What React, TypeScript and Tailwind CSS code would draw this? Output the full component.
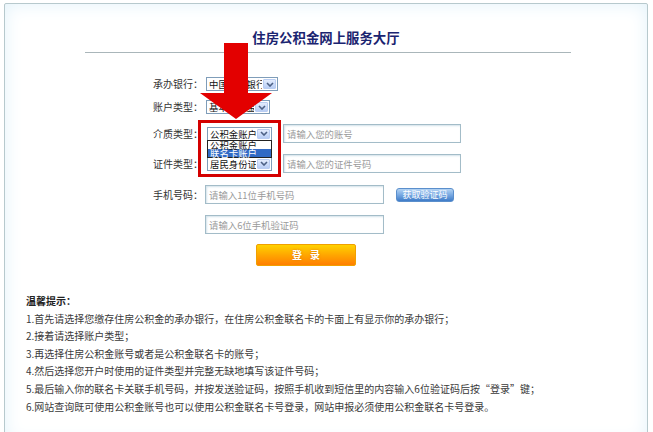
import { ReactNode } from "react";

function Chevron() {
  return (
    <svg width="8" height="5" viewBox="0 0 8 5" className="block">
      <path d="M1 1 L4 4 L7 1" fill="none" stroke="#4d6185" strokeWidth="1.6" />
    </svg>
  );
}

function Select({ text, className }: { text: string; className: string }) {
  return (
    <div
      className={`flex h-[14px] items-center overflow-hidden border border-[#7f9db9] bg-white ${className}`}
    >
      <span className="flex-1 overflow-hidden whitespace-nowrap pl-[2px] text-[9.4px] leading-[12px] text-[#111]">
        {text}
      </span>
      <span className="m-px flex h-[10px] w-[13px] shrink-0 items-center justify-center rounded-[1px] border border-[#b9cdf2] bg-gradient-to-b from-[#e3ecfd] to-[#b8cdf4]">
        <Chevron />
      </span>
    </div>
  );
}

function Field({ placeholder, className }: { placeholder: string; className: string }) {
  return (
    <input
      placeholder={placeholder}
      className={`h-[19px] border border-[#a3bcc8] bg-white px-[3px] text-[9.4px] shadow-[inset_1px_1px_2px_#d3e2ea] outline-none placeholder:text-[#9a9a9a] ${className}`}
    />
  );
}

function Row({ label, className, children }: { label?: string; className: string; children: ReactNode }) {
  return (
    <div className={`flex items-center ${className}`}>
      <span className="w-[50px] shrink-0 text-right text-[10px] leading-[12px] whitespace-nowrap text-[#333]">
        {label}
      </span>
      {children}
    </div>
  );
}

const tips = [
  "1.首先请选择您缴存住房公积金的承办银行，在住房公积金联名卡的卡面上有显示你的承办银行；",
  "2.接着请选择账户类型；",
  "3.再选择住房公积金账号或者是公积金联名卡的账号；",
  "4.然后选择您开户时使用的证件类型并完整无缺地填写该证件号码；",
  "5.最后输入你的联名卡关联手机号码，并按发送验证码，按照手机收到短信里的内容输入6位验证码后按“登录”键；",
  "6.网站查询既可使用公积金账号也可以使用公积金联名卡号登录，网站申报必须使用公积金联名卡号登录。",
];

export default function App() {
  return (
    <div className="h-[432px] w-[653px] overflow-hidden bg-white pt-[3px] pl-[4px] pr-[5px] font-['Noto_Sans_CJK_SC',sans-serif]">
      <div className="flex h-[440px] flex-col rounded-t-[2px] border border-[#b7c9cd] bg-white shadow-[inset_0_0_18px_#e2f2fa]">
        <h1 className="mt-[24px] text-center text-[13.4px] leading-[18px] font-bold text-[#1a2470]">
          住房公积金网上服务大厅
        </h1>
        <div className="mt-[6px] ml-[80px] h-px w-[486px] bg-[#aab6ba]" />

        <div className="relative flex flex-col pl-[148px]">
          <Row label="承办银行：" className="mt-[21px] h-[20px]">
            <Select text="中国建设银行" className="ml-[3px] w-[72px]" />
          </Row>
          <Row label="账户类型：" className="mt-[3px] h-[20px]">
            <Select text="基本公积金" className="ml-[3px] w-[64px]" />
          </Row>
          <Row label="介质类型：" className="mt-[7px] h-[19px]">
            <div className="relative ml-[4px]">
              <Select text="公积金账户" className="w-[65px]" />
              <div className="absolute top-[13px] left-0 z-10 w-[65px] border border-[#222] bg-white text-[9.4px] leading-[8px]">
                <div className="h-[8px] whitespace-nowrap pl-[2px] text-[#111]">公积金账户</div>
                <div className="h-[8px] whitespace-nowrap bg-[#316ac5] pl-[2px] text-white">联名卡账户</div>
              </div>
            </div>
            <Field placeholder="请输入您的账号" className="ml-[11px] w-[178px]" />
          </Row>
          <Row label="证件类型：" className="mt-[11px] h-[19px]">
            <Select text="居民身份证" className="ml-[4px] w-[65px]" />
            <Field placeholder="请输入您的证件号码" className="ml-[11px] w-[178px]" />
          </Row>
          <Row label="手机号码：" className="mt-[12px] h-[19px]">
            <Field placeholder="请输入11位手机号码" className="ml-[2px] w-[179px]" />
            <button
              type="button"
              className="ml-[12px] h-[14px] w-[58px] rounded-[3px] border border-[#5b8fcc] bg-gradient-to-b from-[#b3d3f3] via-[#77a8e2] to-[#3f7cc8] text-[9px] leading-[12px] text-white"
            >
              获取验证码
            </button>
          </Row>
          <Row className="mt-[11px] h-[19px]">
            <Field placeholder="请输入6位手机验证码" className="ml-[2px] w-[179px]" />
          </Row>
          <button
            type="button"
            className="mt-[10px] ml-[103px] block h-[22px] w-[100px] rounded-[2px] border border-[#f0a000] bg-gradient-to-b from-[#ffd200] via-[#ffa600] to-[#ff7e00] pl-[8px] text-[10px] leading-[20px] font-bold tracking-[8px] text-white [text-shadow:0_0_2px_#d97000]"
          >
            登录
          </button>

          <div className="pointer-events-none absolute top-[67px] left-[193px] z-20 h-[57px] w-[83px] border-[3px] border-[#d40000]" />
          <svg
            width="80"
            height="78"
            viewBox="0 0 80 78"
            className="pointer-events-none absolute top-[-10px] left-[189px] z-30"
          >
            <polygon points="30,0 54,0 54,50 78,50 42,76 6,50 30,50" fill="#e30000" />
          </svg>
        </div>

        <div className="mt-[26px] pl-[21px] text-[10px] leading-[17.6px] text-[#3a3a3a]">
          <div className="font-bold text-[#222]">温馨提示：</div>
          {tips.map((t) => (
            <div key={t} className="whitespace-nowrap">
              {t}
            </div>
          ))}
        </div>
      </div>
    </div>
  );
}
